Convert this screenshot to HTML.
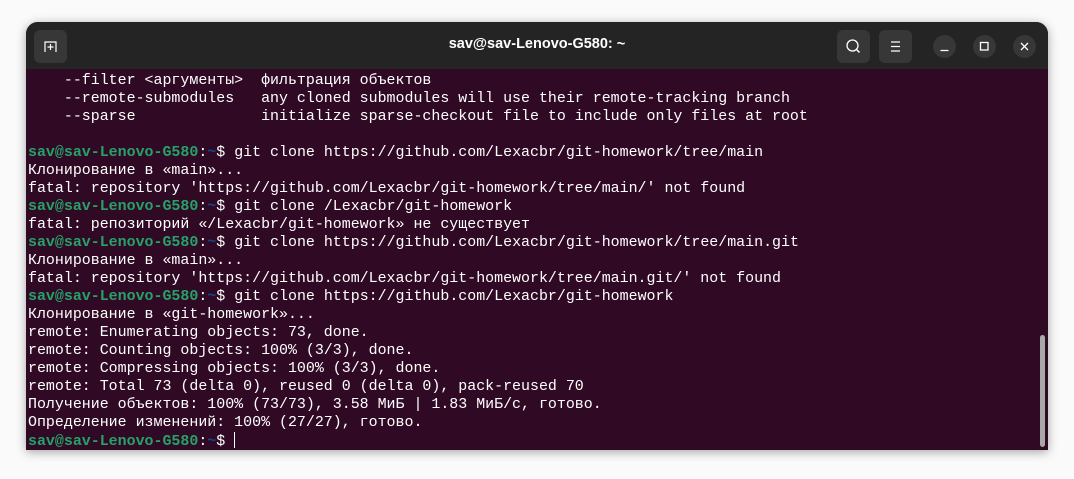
<!DOCTYPE html>
<html><head><meta charset="utf-8"><style>
html,body{margin:0;padding:0;}
body{width:1074px;height:479px;background:#fafafa;position:relative;overflow:hidden;font-family:"Liberation Sans",sans-serif;}
.win{position:absolute;left:26px;top:22px;width:1022px;height:428px;border-radius:12px 12px 0 0;overflow:hidden;box-shadow:0 2px 10px rgba(0,0,0,.35);background:#300a24;}
.hdr{position:absolute;left:0;top:0;width:100%;height:47px;background:#242424;}
.btn{position:absolute;top:8px;width:33px;height:33px;border-radius:6px;background:#373737;}
.cb{position:absolute;top:13px;width:23px;height:23px;border-radius:50%;background:#373737;}
.title{position:absolute;left:0;right:0;top:14px;text-align:center;color:#fff;font-weight:bold;font-size:14.5px;}
.term{position:absolute;left:2px;top:49px;font-family:"Liberation Mono","Noto Sans CJK SC",monospace;font-size:14.95px;line-height:18px;color:#ffffff;white-space:pre;}
.g{color:#26a269;font-weight:bold}.b{color:#12488b;font-weight:bold}
.sb{position:absolute;left:1014px;top:313px;width:5px;height:112px;border-radius:3px;background:#a8a8a8;}
</style></head><body>
<div class="win">
<div class="hdr">
<div class="btn" style="left:8px"><svg width="33" height="33" viewBox="0 0 33 33"><path d="M11 22V12h11v10M16.5 14v6M13.5 17h6" stroke="#fff" stroke-width="1.2" fill="none"/></svg></div>
<div class="title">sav@sav-Lenovo-G580: ~</div>
<div class="btn" style="left:811px"><svg width="33" height="33" viewBox="0 0 33 33"><circle cx="15.5" cy="15.5" r="5.5" stroke="#fff" stroke-width="1.3" fill="none"/><path d="M19.5 19.5l3 3" stroke="#fff" stroke-width="1.5"/></svg></div>
<div class="btn" style="left:853px"><svg width="33" height="33" viewBox="0 0 33 33"><path d="M12 12h9M12 16.5h9M12 21h9" stroke="#fff" stroke-width="1.2"/></svg></div>
<div class="cb" style="left:907px"><svg width="23" height="23"><path d="M7.5 15.5h8" stroke="#fff" stroke-width="1.3"/></svg></div>
<div class="cb" style="left:947px"><svg width="23" height="23"><rect x="7.5" y="7.5" width="7.5" height="7.5" stroke="#fff" stroke-width="1.3" fill="none"/></svg></div>
<div class="cb" style="left:987px"><svg width="23" height="23"><path d="M8 8l7 7M15 8l-7 7" stroke="#fff" stroke-width="1.3"/></svg></div>
</div>
<div class="term" style="top:50px">    --filter &lt;аргументы&gt;  фильтрация объектов
    --remote-submodules   any cloned submodules will use their remote-tracking branch
    --sparse              initialize sparse-checkout file to include only files at root

<span class="g">sav@sav-Lenovo-G580</span>:<span class="b">~</span>$ git clone https://github.com/Lexacbr/git-homework/tree/main
Клонирование в «main»...
fatal: repository 'https://github.com/Lexacbr/git-homework/tree/main/' not found
<span class="g">sav@sav-Lenovo-G580</span>:<span class="b">~</span>$ git clone /Lexacbr/git-homework
fatal: репозиторий «/Lexacbr/git-homework» не существует
<span class="g">sav@sav-Lenovo-G580</span>:<span class="b">~</span>$ git clone https://github.com/Lexacbr/git-homework/tree/main.git
Клонирование в «main»...
fatal: repository 'https://github.com/Lexacbr/git-homework/tree/main.git/' not found
<span class="g">sav@sav-Lenovo-G580</span>:<span class="b">~</span>$ git clone https://github.com/Lexacbr/git-homework
Клонирование в «git-homework»...
remote: Enumerating objects: 73, done.
remote: Counting objects: 100% (3/3), done.
remote: Compressing objects: 100% (3/3), done.
remote: Total 73 (delta 0), reused 0 (delta 0), pack-reused 70
Получение объектов: 100% (73/73), 3.58 МиБ | 1.83 МиБ/с, готово.
Определение изменений: 100% (27/27), готово.
<span class="g">sav@sav-Lenovo-G580</span>:<span class="b">~</span>$ <span style="display:inline-block;width:1px;height:16px;background:#fff;vertical-align:-3px"></span></div>
<div class="sb"></div>
</div>
</body></html>
